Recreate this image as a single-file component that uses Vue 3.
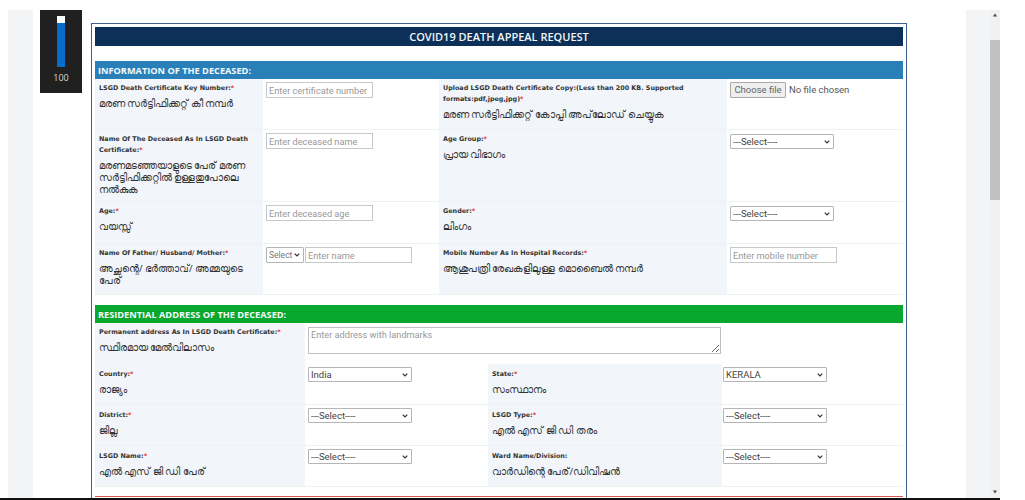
<script setup>
const infoRows = [
  { cls: 'h50', a: { t: 'LSGD Death Certificate Key Number:', req: true, ml: 'മരണ സർട്ടിഫിക്കറ്റ് കീ നമ്പർ' }, ph: 'Enter certificate number',
    b: { t: 'Upload LSGD Death Certificate Copy:(Less than 200 KB. Supported formats:pdf,jpeg,jpg)', req: true, ml: 'മരണ സർട്ടിഫിക്കറ്റ് കോപ്പി അപ്‌ലോഡ് ചെയ്യുക' }, file: true },
  { cls: 'h71', a: { t: 'Name Of The Deceased As In LSGD Death Certificate:', req: true, ml: 'മരണമടഞ്ഞയാളുടെ പേര് മരണ സർട്ടിഫിക്കറ്റിൽ ഉള്ളതുപോലെ നൽകുക' }, ph: 'Enter deceased name',
    b: { t: 'Age Group:', req: true, ml: 'പ്രായ വിഭാഗം' } },
  { cls: 'h41', a: { t: 'Age:', req: true, ml: 'വയസ്സ്' }, ph: 'Enter deceased age',
    b: { t: 'Gender:', req: true, ml: 'ലിംഗം' } },
  { cls: 'h50', a: { t: 'Name Of Father/ Husband/ Mother:', req: true, ml: 'അച്ഛന്റെ/ ഭർത്താവ്/ അമ്മയുടെ പേര്' }, combo: true,
    b: { t: 'Mobile Number As In Hospital Records:', req: true, ml: 'ആശുപത്രി രേഖകളിലുള്ള മൊബൈൽ നമ്പർ' }, ph2: 'Enter mobile number' },
]
const addrRows = [
  { a: { t: 'Country:', req: true, ml: 'രാജ്യം' }, v1: 'India', b: { t: 'State:', req: true, ml: 'സംസ്ഥാനം' }, v2: 'KERALA' },
  { a: { t: 'District:', req: true, ml: 'ജില്ല' }, v1: '---Select----', b: { t: 'LSGD Type:', req: true, ml: 'എൽ എസ് ജി ഡി തരം' }, v2: '---Select----' },
  { a: { t: 'LSGD Name:', req: true, ml: 'എൽ എസ് ജി ഡി പേര്' }, v1: '---Select----', b: { t: 'Ward Name/Division:', req: false, ml: 'വാർഡിന്റെ പേര്/ഡിവിഷൻ' }, v2: '---Select----' },
]
</script>

<template>
  <div class="page">
    <div class="main">
      <div class="gutter"></div>
      <div class="meter">
        <div class="track"><div class="fill"></div></div>
        <div class="num">100</div>
      </div>
      <div class="panel">
        <div class="title">COVID19 DEATH APPEAL REQUEST</div>
        <div class="sec blue">INFORMATION OF THE DECEASED:</div>
        <div v-for="(r, i) in infoRows" :key="i" class="row info" :class="r.cls">
          <div class="lab">
            <div class="en">{{ r.a.t }}<span v-if="r.a.req" class="req">*</span></div>
            <div class="ml">{{ r.a.ml }}</div>
          </div>
          <div class="ctl">
            <template v-if="r.combo">
              <select class="sel mini"><option>Select</option></select>
              <input class="inp" placeholder="Enter name" />
            </template>
            <input v-else class="inp" :placeholder="r.ph" />
          </div>
          <div class="lab">
            <div class="en">{{ r.b.t }}<span class="req">*</span></div>
            <div class="ml">{{ r.b.ml }}</div>
          </div>
          <div class="ctl">
            <template v-if="r.file">
              <button type="button" class="filebtn">Choose file</button>
              <span class="filetxt">No file chosen</span>
            </template>
            <input v-else-if="r.ph2" class="inp" :placeholder="r.ph2" />
            <select v-else class="sel low"><option>---Select----</option></select>
          </div>
        </div>
        <div class="sec green">RESIDENTIAL ADDRESS OF THE DECEASED:</div>
        <div class="row addr first">
          <div class="lab">
            <div class="en">Permanent address As In LSGD Death Certificate:<span class="req">*</span></div>
            <div class="ml">സ്ഥിരമായ മേൽവിലാസം</div>
          </div>
          <div class="ctl wide"><textarea class="area" placeholder="Enter address with landmarks"></textarea></div>
        </div>
        <div v-for="(r, i) in addrRows" :key="i" class="row addr plain">
          <div class="lab">
            <div class="en">{{ r.a.t }}<span class="req">*</span></div>
            <div class="ml">{{ r.a.ml }}</div>
          </div>
          <div class="ctl"><select class="sel"><option>{{ r.v1 }}</option></select></div>
          <div class="lab">
            <div class="en">{{ r.b.t }}<span v-if="r.b.req" class="req">*</span></div>
            <div class="ml">{{ r.b.ml }}</div>
          </div>
          <div class="ctl tight"><select class="sel"><option>{{ r.v2 }}</option></select></div>
        </div>
        <div class="redline"></div>
      </div>
      <div class="side">
        <div class="sbar">
          <svg class="arrow" width="10" height="10" viewBox="0 0 10 10"><path d="M5 3.5 7.2 6.5H2.8Z" fill="#505050"/></svg>
          <div class="thumb"></div>
          <svg class="arrow down" width="10" height="10" viewBox="0 0 10 10"><path d="M5 6.5 7.2 3.5H2.8Z" fill="#505050"/></svg>
        </div>
      </div>
    </div>
    <div class="foot"></div>
  </div>
</template>

<style>
html, body { margin: 0; padding: 0; background: #fff; overflow: hidden; }
</style>

<style scoped>
.page { width: 1025px; height: 500px; overflow: hidden; font-family: "Noto Sans", "Open Sans", sans-serif; background: #fff; }
.main { height: 498px; display: flex; align-items: flex-start; overflow: hidden; padding-left: 8px; box-sizing: border-box; }
.gutter { width: 25px; height: 488px; margin-top: 10px; background: #f3f4f6; flex: none; }
.meter { width: 42px; height: 83px; margin: 10px 0 0 7px; background: #202020; flex: none; display: flex; flex-direction: column; align-items: center; padding-top: 6px; box-sizing: border-box; }
.track { width: 8px; height: 51px; background: #0a6cc9; }
.fill { height: 7px; background: #fff; }
.num { margin-top: 5px; font: 9px/12px "Open Sans", sans-serif; color: #d8d8d8; }
.panel { width: 816px; height: 480px; margin: 23px 0 0 9px; flex: none; box-sizing: border-box; border: 1px solid #3f5f8f; border-bottom: 0; padding: 3px 3px 0; overflow: hidden; }
.title { height: 19px; background: #0c3057; color: #f4f6f8; text-align: center; font: 600 11px/20px "Open Sans", sans-serif; }
.sec { height: 18px; padding-left: 3px; color: #f4f8fb; font: 700 9.2px/19px "Open Sans", sans-serif; }
.blue { margin-top: 15px; background: #2980b9; }
.green { margin-top: 10px; background: #08a82e; }
.row { display: grid; border-bottom: 1px solid #f0f1f3; box-sizing: border-box; }
.info { grid-template-columns: 168px 176px 288px 176px; }
.h50 { height: 51px; }
.h71 { height: 72px; }
.h41 { height: 42px; }
.addr { grid-template-columns: 210px 183px 234px 181px; height: 41px; }
.addr.first { height: 41px; border-bottom: 0; }
.lab { background: #f2f6fa; padding: 4px 4px 0; overflow: hidden; }
.plain .lab { padding-top: 5px; }
.en { font: 700 6.4px/11px "DejaVu Sans", sans-serif; color: #333; }
.req { color: #e33; }
.ml { margin-top: 4px; font: 9.5px/12px "Noto Sans", "DejaVu Sans", sans-serif; color: #333; }
.ctl { padding: 3px; display: flex; align-items: flex-start; gap: 1px; }
.ctl.tight { padding-left: 1px; }
.wide { grid-column: 2 / 5; padding-top: 4px; }
.inp { width: 107px; height: 16px; box-sizing: border-box; padding: 0 2px; border: 1px solid #c8c8c8; background: #fff; font: 9.2px "Roboto", sans-serif; outline: 0; }
.inp::placeholder, .area::placeholder { color: #999; }
.sel {
  appearance: none; width: 104px; height: 15px; box-sizing: border-box; padding: 0 0 0 2px;
  border: 1px solid #b5b5b5; border-radius: 1px; font: 9.5px "Roboto", sans-serif; color: #444;
  background: #fff url("data:image/svg+xml,%3Csvg xmlns='http://www.w3.org/2000/svg' width='6' height='4'%3E%3Cpath d='M.7.7 3 3 5.3.7' fill='none' stroke='%23333' stroke-width='1.2'/%3E%3C/svg%3E") no-repeat right 3px center;
}
.sel.low { margin-top: 1px; }
.sel.mini { width: 38px; height: 16px; color: #777; font-size: 8.5px; }
.filebtn { width: 56px; height: 16px; flex: none; padding: 0; border: 1px solid #aaa; border-radius: 1px; background: #efefef; color: #666; font: 9.5px/14px "Roboto", sans-serif; }
.filetxt { margin-left: 2px; font: 9.5px/16px "Roboto", sans-serif; color: #555; }
.area { display: block; width: 413px; height: 27px; box-sizing: border-box; padding: 1px 2px; border: 1px solid #c0c0c0; background: #fff; font: 9.2px "Roboto", sans-serif; outline: 0; resize: both; }
.redline { height: 1px; margin-top: 9px; background: #d9534f; }
.side { margin: 10px 0 0 59px; width: 34px; height: 488px; background: #f3f4f6; flex: none; display: flex; justify-content: flex-end; }
.sbar { width: 10px; height: 100%; background: #f1f1f1; display: flex; flex-direction: column; }
.arrow { flex: none; margin-bottom: 20px; }
.thumb { height: 160px; background: #c1c1c1; flex: none; }
.arrow.down { margin: auto 0 1px; }
.foot { height: 2px; width: 1000px; background: #111; }
</style>
